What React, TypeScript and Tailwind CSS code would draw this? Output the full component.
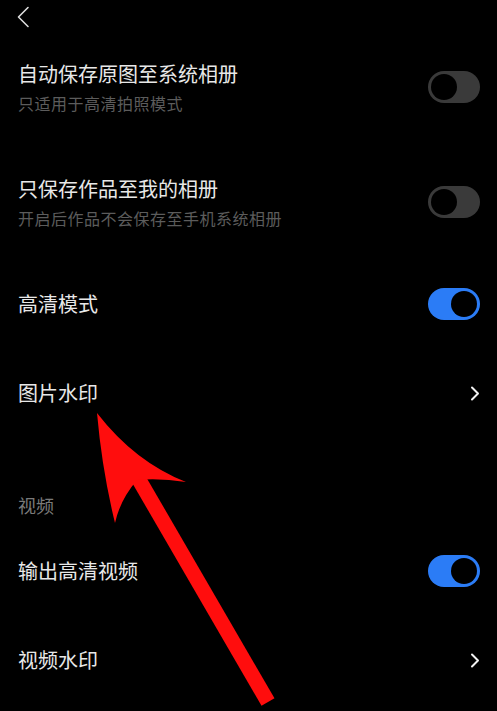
import React from "react";

const font = { fontFamily: '"Noto Sans CJK SC", "Noto Sans", sans-serif' };

function Toggle({ on }: { on: boolean }) {
  return (
    <div
      className={`flex h-[32px] w-[52px] shrink-0 items-center rounded-full px-[3px] ${
        on ? "justify-end bg-[#2b7cf6]" : "justify-start bg-[#3a3a3a]"
      }`}
    >
      <div className="size-[26px] rounded-full bg-black" />
    </div>
  );
}

function Chevron() {
  return (
    <svg width="10" height="15" viewBox="0 0 10 15" className="shrink-0">
      <path d="M2 1.5 L8 7.5 L2 13.5" fill="none" stroke="#f2f2f2" strokeWidth="2" strokeLinecap="round" strokeLinejoin="round" />
    </svg>
  );
}

function Row({
  title,
  sub,
  right,
  h,
}: {
  title: string;
  sub?: string;
  right?: React.ReactNode;
  h: string;
}) {
  return (
    <div className={`flex items-center justify-between pl-[18px] pr-[17px] ${h}`}>
      <div className="flex flex-col">
        <span className="text-[20px] leading-[28px] text-[#e8e8e8]">{title}</span>
        {sub && (
          <span className="mt-[4px] text-[16px] leading-[22px] tracking-[0.5px] text-[#5c5c5c]">{sub}</span>
        )}
      </div>
      {right}
    </div>
  );
}

export default function App() {
  return (
    <div className="relative h-[711px] w-[497px] overflow-hidden bg-black" style={font}>
      <div className="flex h-[34px] items-center pl-[16px]">
        <svg width="14" height="22" viewBox="0 0 14 22">
          <path d="M12 1.5 L2.5 11 L12 20.5" fill="none" stroke="#dcdcdc" strokeWidth="1.6" strokeLinecap="round" strokeLinejoin="round" />
        </svg>
      </div>

      <Row h="h-[105px]" title="自动保存原图至系统相册" sub="只适用于高清拍照模式" right={<Toggle on={false} />} />
      <Row h="h-[126px]" title="只保存作品至我的相册" sub="开启后作品不会保存至手机系统相册" right={<Toggle on={false} />} />
      <Row h="h-[78px]" title="高清模式" right={<Toggle on />} />
      <Row h="h-[100px]" title="图片水印" right={<Chevron />} />

      <div className="h-[87px] pl-[18px] pt-[49px]">
        <span className="text-[18px] leading-[26px] text-[#7a7a7a]">视频</span>
      </div>

      <Row h="h-[82px]" title="输出高清视频" right={<Toggle on />} />
      <Row h="h-[96px]" title="视频水印" right={<Chevron />} />

      {/* red annotation arrow */}
      <svg className="pointer-events-none absolute left-0 top-0" width="497" height="711" viewBox="0 0 497 711">
        <line x1="138" y1="478" x2="268" y2="702" stroke="#ff0d0d" strokeWidth="15" />
        <path
          d="M97 413 Q135 462 186 482 Q160 478 137 480 Q120 500 115 523 Q102 470 97 413 Z"
          fill="#ff0d0d"
        />
      </svg>
    </div>
  );
}
